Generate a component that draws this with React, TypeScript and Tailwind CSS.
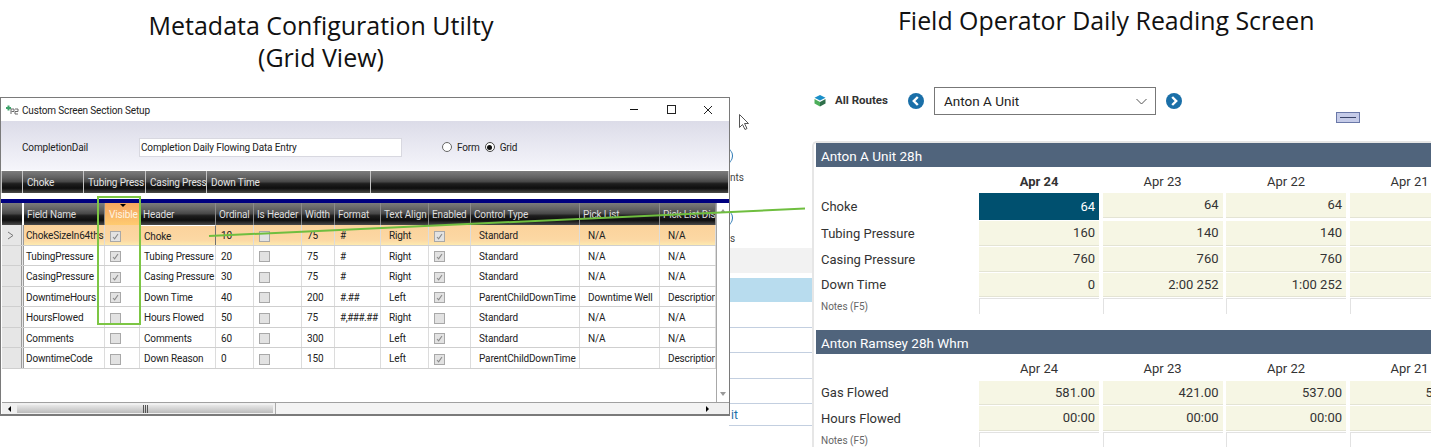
const ui = { fontFamily: 'Roboto, "Open Sans", sans-serif' };

const gridCols =
  "grid grid-cols-[22px_81px_35px_76px_38px_48px_33px_46px_48px_42px_109px_80px_56px]";
const gloss =
  "bg-[linear-gradient(#7c7c7c_0%,#606060_30%,#484848_48%,#1e1e1e_58%,#0e0e0e_78%,#4a4a4a_100%)]";

const bandCols = [
  { label: "Choke", w: "w-[60px]" },
  { label: "Tubing Press", w: "w-[61px]" },
  { label: "Casing Press", w: "w-[60px]" },
  { label: "Down Time", w: "w-[163px]" },
  { label: "", w: "flex-1" },
];

const headers = [
  "Field Name",
  "Visible",
  "Header",
  "Ordinal",
  "Is Header",
  "Width",
  "Format",
  "Text Align",
  "Enabled",
  "Control Type",
  "Pick List",
  "Pick List Dis",
];

type Row = {
  field: string;
  visible: boolean;
  header: string;
  ordinal: string;
  width: string;
  format: string;
  align: string;
  enabled: boolean;
  control: string;
  pick: string;
  dis: string;
};

const rows: Row[] = [
  { field: "ChokeSizeIn64ths", visible: true, header: "Choke", ordinal: "10", width: "75", format: "#", align: "Right", enabled: true, control: "Standard", pick: "N/A", dis: "N/A" },
  { field: "TubingPressure", visible: true, header: "Tubing Pressure", ordinal: "20", width: "75", format: "#", align: "Right", enabled: true, control: "Standard", pick: "N/A", dis: "N/A" },
  { field: "CasingPressure", visible: true, header: "Casing Pressure", ordinal: "30", width: "75", format: "#", align: "Right", enabled: true, control: "Standard", pick: "N/A", dis: "N/A" },
  { field: "DowntimeHours", visible: true, header: "Down Time", ordinal: "40", width: "200", format: "#.##", align: "Left", enabled: true, control: "ParentChildDownTime", pick: "Downtime Well", dis: "Description" },
  { field: "HoursFlowed", visible: false, header: "Hours Flowed", ordinal: "50", width: "75", format: "#,###.##", align: "Right", enabled: false, control: "Standard", pick: "N/A", dis: "N/A" },
  { field: "Comments", visible: false, header: "Comments", ordinal: "60", width: "300", format: "", align: "Left", enabled: true, control: "Standard", pick: "N/A", dis: "N/A" },
  { field: "DowntimeCode", visible: false, header: "Down Reason", ordinal: "0", width: "150", format: "", align: "Left", enabled: true, control: "ParentChildDownTime", pick: "", dis: "Description" },
];

function Check({ on }: { on: boolean }) {
  return (
    <span className="flex h-[11px] w-[11px] items-center justify-center border border-[#a8a8a8] bg-[#e2e2e2]">
      {on && (
        <svg width="9" height="9" viewBox="0 0 9 9" fill="none">
          <path d="M2 5l1.6 1.8L7 2" stroke="#8a8a8a" strokeWidth="1.1" />
        </svg>
      )}
    </span>
  );
}

function Cell({ children, className = "" }: { children?: React.ReactNode; className?: string }) {
  return (
    <div className={`flex items-center overflow-hidden whitespace-nowrap border-r border-[#dcdcdc] pt-[2px] ${className}`}>
      {children}
    </div>
  );
}

function GridRow({ row, index }: { row: Row; index: number }) {
  const selected = index === 0;
  return (
    <div
      className={`${gridCols} border-b border-[#cfcfcf] ${
        selected
          ? "h-[21px] bg-[linear-gradient(#fbd29b,#fcd8a4_75%,#fdeab0)]"
          : index % 2 === 0
            ? "h-[21px]"
            : "h-[20px]"
      }`}
    >
      <div className="flex items-center justify-center border-r-[3px] border-double border-[#9a9a9a] bg-[#e6e6e6] pr-px text-[#777]">
        {selected && (
          <svg width="8" height="9" viewBox="0 0 8 9" fill="none">
            <path d="M1 1l5 3.5L1 8" stroke="#777" strokeWidth="1" />
          </svg>
        )}
      </div>
      <Cell className="pl-[2px]">{row.field}</Cell>
      <Cell className="pl-[5px]">
        <Check on={row.visible} />
      </Cell>
      {selected ? (
        <Cell className="border-x border-t border-x-[#707070] border-t-white pl-[3px]">{row.header}</Cell>
      ) : (
        <Cell className="pl-[4px]">{row.header}</Cell>
      )}
      <Cell className="pl-[5px]">{row.ordinal}</Cell>
      <Cell className="pl-[5px]">
        <Check on={false} />
      </Cell>
      <Cell className="pl-[5px]">{row.width}</Cell>
      <Cell className="pl-[5px] tracking-[-0.5px]">{row.format}</Cell>
      <Cell className="pl-[8px]">{row.align}</Cell>
      <Cell className="pl-[5px]">
        <Check on={row.enabled} />
      </Cell>
      <Cell className="pl-[8px]">{row.control}</Cell>
      <Cell className="pl-[8px]">{row.pick}</Cell>
      <Cell className="pl-[8px]">{row.dis}</Cell>
    </div>
  );
}

function ConfigWindow() {
  return (
    <div
      className="absolute left-0 top-[97px] flex h-[319px] w-[730px] flex-col border border-b-2 border-[#7a7a7a] bg-white text-[10px] leading-none tracking-[-0.15px] text-[#222]"
      style={ui}
    >
      {/* title bar */}
      <div className="flex h-[23px] shrink-0 items-center pl-[4px]">
        <svg width="14" height="10" viewBox="0 0 14 10" className="mr-[3px]">
          <path d="M3.5 0.5v5M1 3h5" stroke="#3fa36b" strokeWidth="2" />
          <path d="M6 9V4h3v2.5H6.5M10 4h3v2.5h-3V9h3" fill="none" stroke="#6b6b6b" strokeWidth="1" />
        </svg>
        <span className="pt-[3px]">Custom Screen Section Setup</span>
        <svg width="90" height="12" viewBox="0 0 90 12" className="ml-auto mr-[11px]" fill="none">
          <path d="M2 5.5h8" stroke="#111" strokeWidth="1" />
          <rect x="39.5" y="1.5" width="8" height="8" stroke="#222" strokeWidth="1" />
          <path d="M76 2l8 8M84 2l-8 8" stroke="#222" strokeWidth="1" />
        </svg>
      </div>

      {/* form area */}
      <div className="flex h-[49px] shrink-0 items-center bg-[linear-gradient(#dcdce8,#f5f5fb)] pl-[21px] pt-[3px]">
        <span className="w-[117px] pt-[1px]">CompletionDail</span>
        <div className="flex h-[19px] w-[263px] items-center border border-[#d8d8e0] bg-white pl-px pt-[1px]">
          Completion Daily Flowing Data Entry
        </div>
        <span className="ml-[40px] h-[10px] w-[10px] rounded-full border border-[#666] bg-white" />
        <span className="ml-[5px] pt-[2px]">Form</span>
        <span className="ml-[5px] flex h-[10px] w-[10px] items-center justify-center rounded-full border border-[#444] bg-white">
          <span className="h-[5px] w-[5px] rounded-full bg-[#111]" />
        </span>
        <span className="ml-[5px] pt-[2px]">Grid</span>
      </div>

      {/* section columns */}
      <div className="mt-px flex h-[22px] shrink-0 gap-px bg-[#c4c4c4] px-px text-[#e4e4e4]">
        <div className={`w-[20px] ${gloss}`} />
        {bandCols.map((c, i) => (
          <div key={i} className={`flex items-center overflow-hidden whitespace-nowrap pl-[4px] pt-[2px] ${c.w} ${gloss}`}>
            {c.label}
          </div>
        ))}
      </div>
      <div className="h-[6px] shrink-0" />
      <div className="h-[4px] shrink-0 bg-[#00007f]" />

      {/* grid */}
      <div className="flex min-h-0 flex-1 flex-col pl-px">
        <div className="flex min-h-0 flex-1">
          <div className="w-[714px]">
            <div className={`${gridCols} h-[22px] ${gloss} text-[#dedede]`}>
              <div className="border-r-2 border-white" />
              {headers.map((h) => (
                <div
                  key={h}
                  className={`relative flex items-center justify-start overflow-hidden whitespace-nowrap border-r border-[#8a8a8a] pl-[3px] pt-[2px] ${
                    h === "Visible" ? "bg-[linear-gradient(#f5a65e,#f8b468_45%,#ffcb70)] pl-[4px] text-[#fff4e2]" : ""
                  }`}
                >
                  {h === "Visible" && (
                    <span className="absolute left-[15px] top-[1px] h-0 w-0 border-x-[3px] border-t-[3px] border-x-transparent border-t-black" />
                  )}
                  {h}
                </div>
              ))}
            </div>
            {rows.map((r, i) => (
              <GridRow key={r.field} row={r} index={i} />
            ))}
          </div>
          <div className="relative flex-1 border-l border-[#a8a8a8]">
            <span className="absolute left-[3px] top-[6px] h-0 w-0 border-x-[3px] border-b-[4px] border-x-transparent border-b-[#999]" />
            <span className="absolute bottom-[6px] left-[3px] h-0 w-0 border-x-[3px] border-t-[4px] border-x-transparent border-t-[#999]" />
          </div>
        </div>
        {/* horizontal scrollbar */}
        <div className="flex h-[12px] shrink-0 items-center border-t border-[#a0a0a0] bg-[#f0f0f0]">
          <span className="ml-[6px] h-0 w-0 border-y-[3px] border-r-[3px] border-y-transparent border-r-black" />
          <div className="relative ml-[6px] flex h-[8px] w-[256px] items-center justify-center bg-[linear-gradient(#e8e8e8,#bcbcbc)]">
            <span className="h-[8px] w-[5px] border-x border-[#555]">
              <span className="mx-auto block h-[8px] w-px bg-[#555]" />
            </span>
          </div>
          <div className="ml-[2px] h-full flex-1 border-l border-[#aaa] bg-[#f3f3f3]" />
          <span className="mr-[20px] h-0 w-0 border-y-[3px] border-l-[3px] border-y-transparent border-l-black" />
        </div>
      </div>
    </div>
  );
}

/* the app behind the window, only its right edge shows */
function BehindWindow() {
  return (
    <div className="ml-[729px] flex w-[83px] flex-col pt-[75px] text-[10px] leading-[14px] text-[#444]">
      <div className="ml-[-10px] h-[18px] w-[14px] rounded-r-full border-r border-[#2a78b5]" />
      <div className="mt-[6px] pl-px">nts</div>
      <div className="ml-[-10px] mt-[24px] h-[18px] w-[14px] rounded-r-full border-r border-[#2a78b5]" />
      <div className="mt-[5px] pl-px">s</div>
      <div className="mt-[2px] h-[25px] bg-[#f2f2f2]" />
      <div className="mt-[5px] h-[24px] bg-[#b8dcee]" />
      <div className="h-[26px] border-b border-[#c3cfe0]" />
      <div className="h-[25px] border-b border-[#c3cfe0]" />
      <div className="h-[26px] border-b border-[#c3cfe0]" />
      <div className="h-[25px] border-b border-[#c3cfe0]" />
      <div className="flex h-[22px] items-center border-b border-[#c3cfe0] pl-[2px] text-[12px] text-[#1a6fa8]">it</div>
    </div>
  );
}

function NavButton({ dir }: { dir: "left" | "right" }) {
  return (
    <svg width="16" height="16" viewBox="0 0 16 16">
      <circle cx="8" cy="8" r="8" fill="#1a6fa8" />
      <path
        d={dir === "left" ? "M9.8 4L5.8 8l4 4" : "M6.2 4l4 4-4 4"}
        fill="none"
        stroke="white"
        strokeWidth="2.4"
      />
    </svg>
  );
}

type Reading = { label: string; values: string[] };

function DataCell({ value, active }: { value: string; active?: boolean }) {
  return (
    <div
      className={`flex items-center justify-end overflow-hidden whitespace-nowrap pr-[4px] ${
        active ? "h-[27px] bg-[#00506f] text-white" : "h-[24.5px] border-b border-[#e4e4d4] bg-[#f6f6e4]"
      }`}
    >
      {value}
    </div>
  );
}

function Section({
  title,
  boldFirst,
  readings,
  dates,
  activeFirst,
}: {
  title: string;
  boldFirst?: boolean;
  readings: Reading[];
  dates: string[];
  activeFirst?: boolean;
}) {
  return (
    <section>
      <div className="ml-[2px] flex h-[24px] items-center bg-[#50647c] pl-[5px] pt-[2px] text-[13.5px] text-white">{title}</div>
      <div className="ml-[2px] grid grid-cols-[154.5px_120px_120px_120px_120px] gap-x-[3.5px] gap-y-[1.2px] pl-[5px] text-[13px] text-[#333]">
        <div className="h-[25px]" />
        {dates.map((d, i) => (
          <div
            key={d}
            className={`flex h-[25px] items-center justify-center pt-[4px] ${boldFirst && i === 0 ? "font-bold" : ""}`}
          >
            {d}
          </div>
        ))}
        {readings.map((r, ri) => (
          <div key={r.label} className="contents">
            <div className="flex items-center">{r.label}</div>
            {r.values.map((v, i) => (
              <DataCell key={i} value={v} active={activeFirst && ri === 0 && i === 0} />
            ))}
          </div>
        ))}
        <div className="flex h-[16px] items-center text-[10px] text-[#666]">Notes (F5)</div>
        {dates.map((d) => (
          <div key={d} className="h-[16px] border-l border-t border-[#e2e2e2]" />
        ))}
      </div>
    </section>
  );
}

const dates = ["Apr 24", "Apr 23", "Apr 22", "Apr 21"];

export default function App() {
  const titleFont = { fontFamily: '"Open Sans", "Noto Sans", sans-serif' };
  return (
    <div className="relative flex h-[447px] w-[1431px] overflow-hidden bg-white" style={ui}>
      {/* left half */}
      <div className="w-[812px] shrink-0">
        <h1
          className="h-[72px] w-[642px] pt-[9px] text-center text-[25px] leading-[32px] text-[#111]"
          style={titleFont}
        >
          Metadata Configuration Utilty
          <br />
          (Grid View)
        </h1>
        <BehindWindow />
      </div>
      <ConfigWindow />

      {/* right half */}
      <div className="flex min-w-0 flex-1 flex-col">
        <h1
          className="h-[87px] shrink-0 pl-[86px] pt-[4px] text-[24.9px] leading-[32px] text-[#111]"
          style={titleFont}
        >
          Field Operator Daily Reading Screen
        </h1>
        <div className="flex h-[28px] shrink-0 items-center pl-[2px]">
          <svg width="12" height="12" viewBox="0 0 12 12">
            <path d="M6 0l5.5 2.8L6 5.6.5 2.8z" fill="#1a8fc8" />
            <path d="M.5 4v4.4L6 11.5V7z" fill="#4cae5a" />
            <path d="M11.5 4v4.4L6 11.5V7z" fill="#2f6f4a" />
          </svg>
          <span className="ml-[9px] w-[73px] text-[11.5px] font-bold text-[#333]">All Routes</span>
          <NavButton dir="left" />
          <div className="ml-[10px] flex h-[28px] w-[222px] items-center justify-between border border-[#777] pl-[9px] pr-[8px] text-[13.5px] text-[#222]">
            Anton A Unit
            <svg width="11" height="7" viewBox="0 0 11 7" fill="none">
              <path d="M.5 1l5 5 5-5" stroke="#555" strokeWidth="1" />
            </svg>
          </div>
          <span className="ml-[10px]">
            <NavButton dir="right" />
          </span>
        </div>
        <div className="flex h-[26px] shrink-0 pl-[524px]">
          <div className="mt-[-3px] flex h-[11px] w-[24px] items-center justify-center border border-[#6a78a8] bg-[#c5cbe8]">
            <span className="h-px w-[16px] bg-[#3a4468]" />
          </div>
        </div>
        <div className="min-h-0 flex-1 rounded-tl-[5px] border-l-2 border-t-2 border-[#e6e6e6]">
          <Section
            title="Anton A Unit 28h"
            boldFirst
            activeFirst
            dates={dates}
            readings={[
              { label: "Choke", values: ["64", "64", "64", ""] },
              { label: "Tubing Pressure", values: ["160", "140", "140", ""] },
              { label: "Casing Pressure", values: ["760", "760", "760", ""] },
              { label: "Down Time", values: ["0", "2:00 252", "1:00 252", ""] },
            ]}
          />
          <div className="h-[16px]" />
          <Section
            title="Anton Ramsey 28h Whm"
            dates={dates}
            readings={[
              { label: "Gas Flowed", values: ["581.00", "421.00", "537.00", "512.00"] },
              { label: "Hours Flowed", values: ["00:00", "00:00", "00:00", "00:00"] },
            ]}
          />
        </div>
      </div>

      {/* annotations on top of both screens */}
      <div className="absolute left-[97px] top-[196px] h-[129px] w-[44px] border-2 border-[#7cc644]" />
      <svg className="absolute left-0 top-0" width="1431" height="447" fill="none">
        <path d="M209 236L805 208.5" stroke="#6fbe3f" strokeWidth="2" />
      </svg>
      <svg className="absolute left-[739px] top-[114px]" width="12" height="18" viewBox="0 0 12 18" fill="white">
        <path d="M.5.5v13l3-3 2.5 5 2-1-2.5-5h4z" stroke="#555" strokeWidth="1" />
      </svg>
    </div>
  );
}
